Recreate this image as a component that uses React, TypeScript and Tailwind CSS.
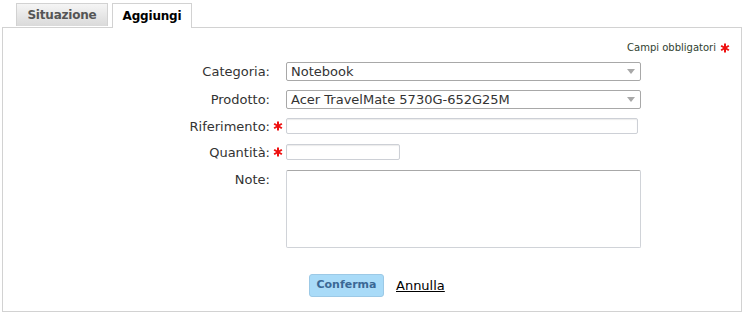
import React from "react";

const font = { fontFamily: '"DejaVu Sans", Verdana, sans-serif' };

function Star() {
  return (
    <svg width="10" height="10" viewBox="0 0 10 10" className="shrink-0">
      <g stroke="#ee1111" strokeWidth="2" strokeLinecap="butt">
        <line x1="5" y1="0.5" x2="5" y2="9.5" />
        <line x1="1.1" y1="2.75" x2="8.9" y2="7.25" />
        <line x1="1.1" y1="7.25" x2="8.9" y2="2.75" />
      </g>
    </svg>
  );
}

function Row({
  label,
  required,
  children,
  top,
}: {
  label: string;
  required?: boolean;
  children: React.ReactNode;
  top?: boolean;
}) {
  return (
    <div className={`flex ${top ? "items-start" : "items-center"}`}>
      <div className={`w-[267px] text-right text-[13px] leading-none text-[#333] ${top ? "pt-[3px]" : ""}`}>
        {label}
      </div>
      <div className={`flex w-[16px] pl-[3px] ${top ? "pt-[4px]" : ""}`}>
        {required && <Star />}
      </div>
      {children}
    </div>
  );
}

function Select({ value }: { value: string }) {
  return (
    <div className="flex h-[19px] w-[355px] items-center justify-between rounded-[2px] border border-[#a8a8a8] bg-white pl-[4px] pr-[5px] text-[13px] leading-none text-[#333]">
      <span>{value}</span>
      <svg width="8" height="5" viewBox="0 0 8 5">
        <path d="M0 0h8L4 5z" fill="#a8a8a8" />
      </svg>
    </div>
  );
}

export default function App() {
  return (
    <div className="h-[312px] w-[744px] bg-white" style={font}>
      <div className="flex items-end gap-[4px] pl-[16px] pt-[3px]">
        <div className="mb-[1px] flex h-[23px] w-[92px] items-center justify-center border border-b-0 border-[#d2d2d2] bg-gradient-to-b from-[#f5f5f5] to-[#dadada] text-[12px] font-bold tracking-[-0.2px] text-[#555]">
          Situazione
        </div>
        <div className="relative z-10 -mb-[1px] flex h-[25px] w-[80px] items-center justify-center border border-b-0 border-[#d2d2d2] bg-white text-[12px] font-bold tracking-[-0.2px] text-black">
          Aggiungi
        </div>
      </div>
      <div className="mx-[2px] flex h-[285px] flex-col border border-[#d2d2d2] bg-white">
        <div className="mt-[13px] flex h-[14px] items-center justify-end gap-[4px] pr-[11px] text-[10px] leading-none text-[#2f3f2f]">
          <span>Campi obbligatori</span>
          <Star />
        </div>
        <div className="mt-[7px] flex flex-col">
          <Row label="Categoria:">
            <Select value="Notebook" />
          </Row>
          <div className="mt-[9px]">
            <Row label="Prodotto:">
              <Select value="Acer TravelMate 5730G-652G25M" />
            </Row>
          </div>
          <div className="mt-[9px]">
            <Row label="Riferimento:" required>
              <div className="h-[16px] w-[352px] rounded-[2px] border border-[#cdd0d6] bg-white shadow-[inset_0_1px_1px_rgba(0,0,0,0.08)]" />
            </Row>
          </div>
          <div className="mt-[10px]">
            <Row label="Quantità:" required>
              <div className="h-[16px] w-[114px] rounded-[2px] border border-[#cdd0d6] bg-white shadow-[inset_0_1px_1px_rgba(0,0,0,0.08)]" />
            </Row>
          </div>
          <div className="mt-[10px]">
            <Row label="Note:" top>
              <div className="h-[78px] w-[355px] rounded-[2px] border border-[#d0d3d8] border-t-[#a8a8a8] bg-white" />
            </Row>
          </div>
        </div>
        <div className="mt-[26px] flex items-center pl-[306px]">
          <button
            type="button"
            className="flex h-[23px] w-[75px] items-center justify-center rounded-[3px] border border-[#9cc9e6] bg-[#a9dbf8] text-[11px] font-bold text-[#3a6895]"
          >
            Conferma
          </button>
          <a href="#" className="ml-[12px] text-[13px] leading-none text-black underline">
            Annulla
          </a>
        </div>
      </div>
    </div>
  );
}
